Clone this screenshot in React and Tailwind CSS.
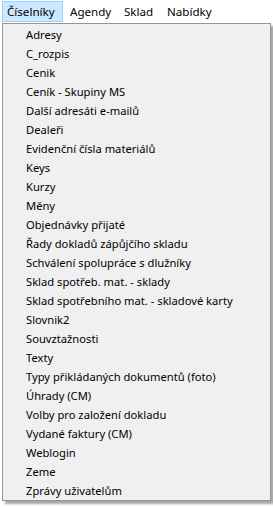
export default function App() {
  const items = [
    "Adresy",
    "C_rozpis",
    "Cenik",
    "Ceník - Skupiny MS",
    "Další adresáti e-mailů",
    "Dealeři",
    "Evidenční čísla materiálů",
    "Keys",
    "Kurzy",
    "Měny",
    "Objednávky přijaté",
    "Řady dokladů zápůjčího skladu",
    "Schválení spolupráce s dlužníky",
    "Sklad spotřeb. mat. - sklady",
    "Sklad spotřebního mat. - skladové karty",
    "Slovnik2",
    "Souvztažnosti",
    "Texty",
    "Typy přikládaných dokumentů (foto)",
    "Úhrady (CM)",
    "Volby pro založení dokladu",
    "Vydané faktury (CM)",
    "Weblogin",
    "Zeme",
    "Zprávy uživatelům",
  ];
  return (
    <div
      className="relative w-[273px] h-[507px] bg-white overflow-hidden text-[11.2px] text-black"
      style={{ fontFamily: '"Noto Sans", "Open Sans", sans-serif' }}
    >
      <div className="flex h-[23px] items-start pt-[1px] pl-[2px] text-[11.6px]">
        <div className="w-[61px] h-[21px] pl-[4px] border border-[#99d1ff] bg-[#cce8ff] flex items-center leading-none">
          Číselníky
        </div>
        <div className="w-[54px] h-[21px] pl-[7px] flex items-center leading-none">Agendy</div>
        <div className="w-[43px] h-[21px] pl-[7px] flex items-center leading-none">Sklad</div>
        <div className="w-[58px] h-[21px] pl-[7px] flex items-center leading-none">Nabídky</div>
      </div>
      <div className="absolute left-[2px] top-[23px] w-[269px] h-[478px] bg-[#f0f0f0] border border-[#979797] shadow-[3px_3px_2px_rgba(0,0,0,0.35)] pt-[1px]">
        {items.map((t) => (
          <div key={t} className="h-[19px] pl-[23px] flex items-center leading-none whitespace-nowrap">
            {t}
          </div>
        ))}
      </div>
    </div>
  );
}
